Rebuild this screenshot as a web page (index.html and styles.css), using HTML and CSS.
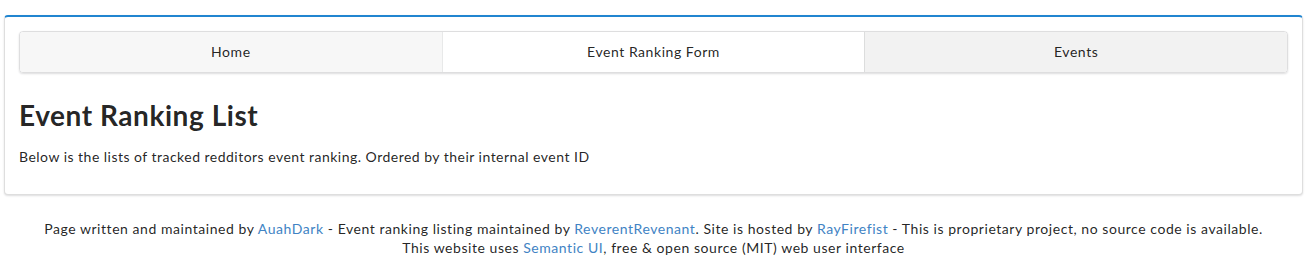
FILE: index.html
```html
<!DOCTYPE html>
<html>
<head>
  <title>Event Ranking List</title>
  <link rel="stylesheet" href="styles.css">
</head>
<body>
  <div class="page">
    <div class="segment">
      <div class="menu">
        <a class="item home" href="#">Home</a>
        <a class="item active" href="#">Event Ranking Form</a>
        <a class="item hover" href="#">Events</a>
      </div>

      <h1>Event Ranking List</h1>
      <p>Below is the lists of tracked redditors event ranking. Ordered by their internal event ID</p>
    </div>

    <div class="footer">
      Page written and maintained by <a href="#">AuahDark</a> - Event ranking listing maintained by <a href="#">ReverentRevenant</a>. Site is hosted by <a href="#">RayFirefist</a> - This is proprietary project, no source code is available.<br>
      This website uses <a href="#">Semantic UI</a>, free &amp; open source (MIT) web user interface
    </div>
  </div>
</body>
</html>
```

FILE: styles.css
```css
body {
  margin: 0;
  background-color: #fff;
  color: rgba(0, 0, 0, 0.87);
  font-family: Lato, 'Helvetica Neue', Arial, sans-serif;
  font-size: 14px;
  line-height: 20px;
  letter-spacing: 0.55px;
}

a {
  color: #4183c4;
  text-decoration: none;
}

.page {
  padding: 15px 13px 0 4px;
}

.segment {
  border: 1px solid rgba(34, 36, 38, 0.15);
  border-top: 2px solid #2185d0;
  border-radius: 4px;
  box-shadow: 0 1px 2px 0 rgba(34, 36, 38, 0.15);
  padding: 14px 14px 27px;
}

.menu {
  display: flex;
  height: 40px;
  border: 1px solid rgba(34, 36, 38, 0.15);
  border-radius: 4px;
  box-shadow: 0 1px 2px 0 rgba(34, 36, 38, 0.15);
  overflow: hidden;
}

.item {
  flex: 1;
  display: flex;
  align-items: center;
  justify-content: center;
  color: rgba(0, 0, 0, 0.87);
  border-left: 1px solid rgba(34, 36, 38, 0.1);
}

.item:first-child {
  border-left: none;
}

.item.home {
  background-color: #f7f7f7;
}

.item.active {
  background-color: #fff;
}

.item.hover {
  background-color: #f2f2f2;
}

h1 {
  margin: 24px 0 14px;
  font-size: 28px;
  line-height: 36px;
  font-weight: bold;
}

p {
  margin: 0;
  letter-spacing: 0.48px;
}

.footer {
  margin-top: 24px;
  text-align: center;
  line-height: 19px;
}
```
